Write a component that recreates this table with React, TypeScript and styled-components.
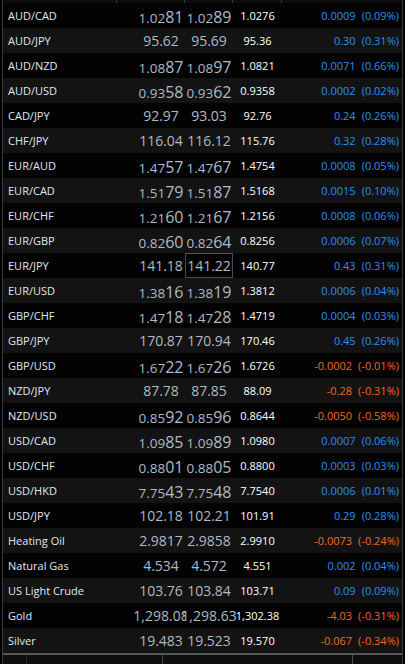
import React from 'react';
import styled, { createGlobalStyle } from 'styled-components';

// Quote board data
type Quote = {
  name: string;
  bid: string;
  ask: string;
  close: string;
  change: string;
  pct: string;
  pips?: boolean;
  focus?: boolean;
};

const quotes: Quote[] = [
  { name: 'AUD/CAD', bid: '1.0281', ask: '1.0289', close: '1.0276', change: '0.0009', pct: '(0.09%)', pips: true },
  { name: 'AUD/JPY', bid: '95.62', ask: '95.69', close: '95.36', change: '0.30', pct: '(0.31%)' },
  { name: 'AUD/NZD', bid: '1.0887', ask: '1.0897', close: '1.0821', change: '0.0071', pct: '(0.66%)', pips: true },
  { name: 'AUD/USD', bid: '0.9358', ask: '0.9362', close: '0.9358', change: '0.0002', pct: '(0.02%)', pips: true },
  { name: 'CAD/JPY', bid: '92.97', ask: '93.03', close: '92.76', change: '0.24', pct: '(0.26%)' },
  { name: 'CHF/JPY', bid: '116.04', ask: '116.12', close: '115.76', change: '0.32', pct: '(0.28%)' },
  { name: 'EUR/AUD', bid: '1.4757', ask: '1.4767', close: '1.4754', change: '0.0008', pct: '(0.05%)', pips: true },
  { name: 'EUR/CAD', bid: '1.5179', ask: '1.5187', close: '1.5168', change: '0.0015', pct: '(0.10%)', pips: true },
  { name: 'EUR/CHF', bid: '1.2160', ask: '1.2167', close: '1.2156', change: '0.0008', pct: '(0.06%)', pips: true },
  { name: 'EUR/GBP', bid: '0.8260', ask: '0.8264', close: '0.8256', change: '0.0006', pct: '(0.07%)', pips: true },
  { name: 'EUR/JPY', bid: '141.18', ask: '141.22', close: '140.77', change: '0.43', pct: '(0.31%)', focus: true },
  { name: 'EUR/USD', bid: '1.3816', ask: '1.3819', close: '1.3812', change: '0.0006', pct: '(0.04%)', pips: true },
  { name: 'GBP/CHF', bid: '1.4718', ask: '1.4728', close: '1.4719', change: '0.0004', pct: '(0.03%)', pips: true },
  { name: 'GBP/JPY', bid: '170.87', ask: '170.94', close: '170.46', change: '0.45', pct: '(0.26%)' },
  { name: 'GBP/USD', bid: '1.6722', ask: '1.6726', close: '1.6726', change: '-0.0002', pct: '(-0.01%)', pips: true },
  { name: 'NZD/JPY', bid: '87.78', ask: '87.85', close: '88.09', change: '-0.28', pct: '(-0.31%)' },
  { name: 'NZD/USD', bid: '0.8592', ask: '0.8596', close: '0.8644', change: '-0.0050', pct: '(-0.58%)', pips: true },
  { name: 'USD/CAD', bid: '1.0985', ask: '1.0989', close: '1.0980', change: '0.0007', pct: '(0.06%)', pips: true },
  { name: 'USD/CHF', bid: '0.8801', ask: '0.8805', close: '0.8800', change: '0.0003', pct: '(0.03%)', pips: true },
  { name: 'USD/HKD', bid: '7.7543', ask: '7.7548', close: '7.7540', change: '0.0006', pct: '(0.01%)', pips: true },
  { name: 'USD/JPY', bid: '102.18', ask: '102.21', close: '101.91', change: '0.29', pct: '(0.28%)' },
  { name: 'Heating Oil', bid: '2.9817', ask: '2.9858', close: '2.9910', change: '-0.0073', pct: '(-0.24%)' },
  { name: 'Natural Gas', bid: '4.534', ask: '4.572', close: '4.551', change: '0.002', pct: '(0.04%)' },
  { name: 'US Light Crude', bid: '103.76', ask: '103.84', close: '103.71', change: '0.09', pct: '(0.09%)' },
  { name: 'Gold', bid: '1,298.08', ask: '1,298.63', close: '1,302.38', change: '-4.03', pct: '(-0.31%)' },
  { name: 'Silver', bid: '19.483', ask: '19.523', close: '19.570', change: '-0.067', pct: '(-0.34%)' },
];

const GlobalStyle = createGlobalStyle`
  html, body {
    margin: 0;
    padding: 0;
    background: #000;
  }
  body {
    font-family: "Open Sans", "Noto Sans", sans-serif;
    -webkit-font-smoothing: antialiased;
  }
`;

const COLS = '134px 48px 48px 49px 120px';

const Screen = styled.div`
  width: 405px;
  height: 664px;
  background: #000;
  overflow: hidden;
  display: flex;
  flex-direction: column;
`;

const Frame = styled.div`
  margin-left: 2px;
  width: 399px;
  flex: 1;
  display: flex;
  flex-direction: column;
  border-left: 1px solid #3a3a3a;
  border-right: 1px solid #3a3a3a;
`;

const HeaderStrip = styled.div`
  height: 3px;
  display: grid;
  grid-template-columns: 114px 68px 48px 49px 120px;
  background: #0b0b0b;
`;

const HeaderCell = styled.div`
  border-right: 1px solid #333;
  &:last-child {
    border-right: none;
  }
`;

const Board = styled.div`
  display: flex;
  flex-direction: column;
`;

const Row = styled.div<{ $alt: boolean }>`
  display: grid;
  grid-template-columns: ${COLS};
  height: 25px;
  background: ${({ $alt }) => ($alt ? '#131313' : '#030303')};
`;

const Name = styled.div`
  padding-left: 5px;
  font-size: 11px;
  line-height: 25px;
  color: #dfe8f2;
  white-space: nowrap;
`;

const Price = styled.div<{ $focus?: boolean; $cover?: boolean }>`
  position: relative;
  display: flex;
  justify-content: center;
  align-items: baseline;
  box-sizing: border-box;
  height: 25px;
  padding-top: 5px;
  font-size: 14px;
  line-height: 1;
  color: #adbac8;
  white-space: nowrap;
  background: ${({ $cover }) => ($cover ? 'inherit' : 'transparent')};
  border: 1px solid ${({ $focus }) => ($focus ? '#414d59' : 'transparent')};
  border-top-color: ${({ $focus }) => ($focus ? '#2c5f94' : 'transparent')};
`;

const Small = styled.span`
  font-size: 13.5px;
`;

const Big = styled.span`
  font-size: 16px;
`;

const Close = styled.div`
  display: flex;
  justify-content: center;
  font-size: 11px;
  font-weight: 400;
  line-height: 25px;
  color: #ffffff;
  white-space: nowrap;
`;

const Change = styled.div<{ $down: boolean }>`
  display: flex;
  justify-content: flex-end;
  gap: 6px;
  padding-right: 3px;
  font-size: 11px;
  line-height: 25px;
  color: ${({ $down }) => ($down ? '#f0691f' : '#2a8ff0')};
  white-space: nowrap;
`;

const Footer = styled.div`
  flex: 1;
  display: grid;
  grid-template-columns: 24px 136px 190px 1fr;
  border-top: 2px solid #575757;
  background: #0e0e0e;
`;

const FooterCell = styled.div<{ $tick?: boolean }>`
  border-right: 1px solid ${({ $tick }) => ($tick ? '#2a2a2a' : '#4a4a4a')};
  &:last-child {
    border-right: none;
  }
`;

const PriceText: React.FC<{ value: string; pips?: boolean }> = ({ value, pips }) => {
  if (!pips) return <>{value}</>;
  return (
    <>
      <Small>{value.slice(0, -2)}</Small>
      <Big>{value.slice(-2)}</Big>
    </>
  );
};

const App: React.FC = () => {
  return (
    <Screen>
      <GlobalStyle />
      <Frame>
        <HeaderStrip>
          <HeaderCell />
          <HeaderCell />
          <HeaderCell />
          <HeaderCell />
          <HeaderCell />
        </HeaderStrip>
        <Board>
          {quotes.map((q, i) => (
            <Row key={q.name} $alt={i % 2 === 1}>
              <Name>{q.name}</Name>
              <Price>
                <PriceText value={q.bid} pips={q.pips} />
              </Price>
              <Price $focus={q.focus} $cover>
                <PriceText value={q.ask} pips={q.pips} />
              </Price>
              <Close>{q.close}</Close>
              <Change $down={q.change.startsWith('-')}>
                <span>{q.change}</span>
                <span>{q.pct}</span>
              </Change>
            </Row>
          ))}
        </Board>
        <Footer>
          <FooterCell $tick />
          <FooterCell />
          <FooterCell />
          <FooterCell />
        </Footer>
      </Frame>
    </Screen>
  );
};

export default App;
